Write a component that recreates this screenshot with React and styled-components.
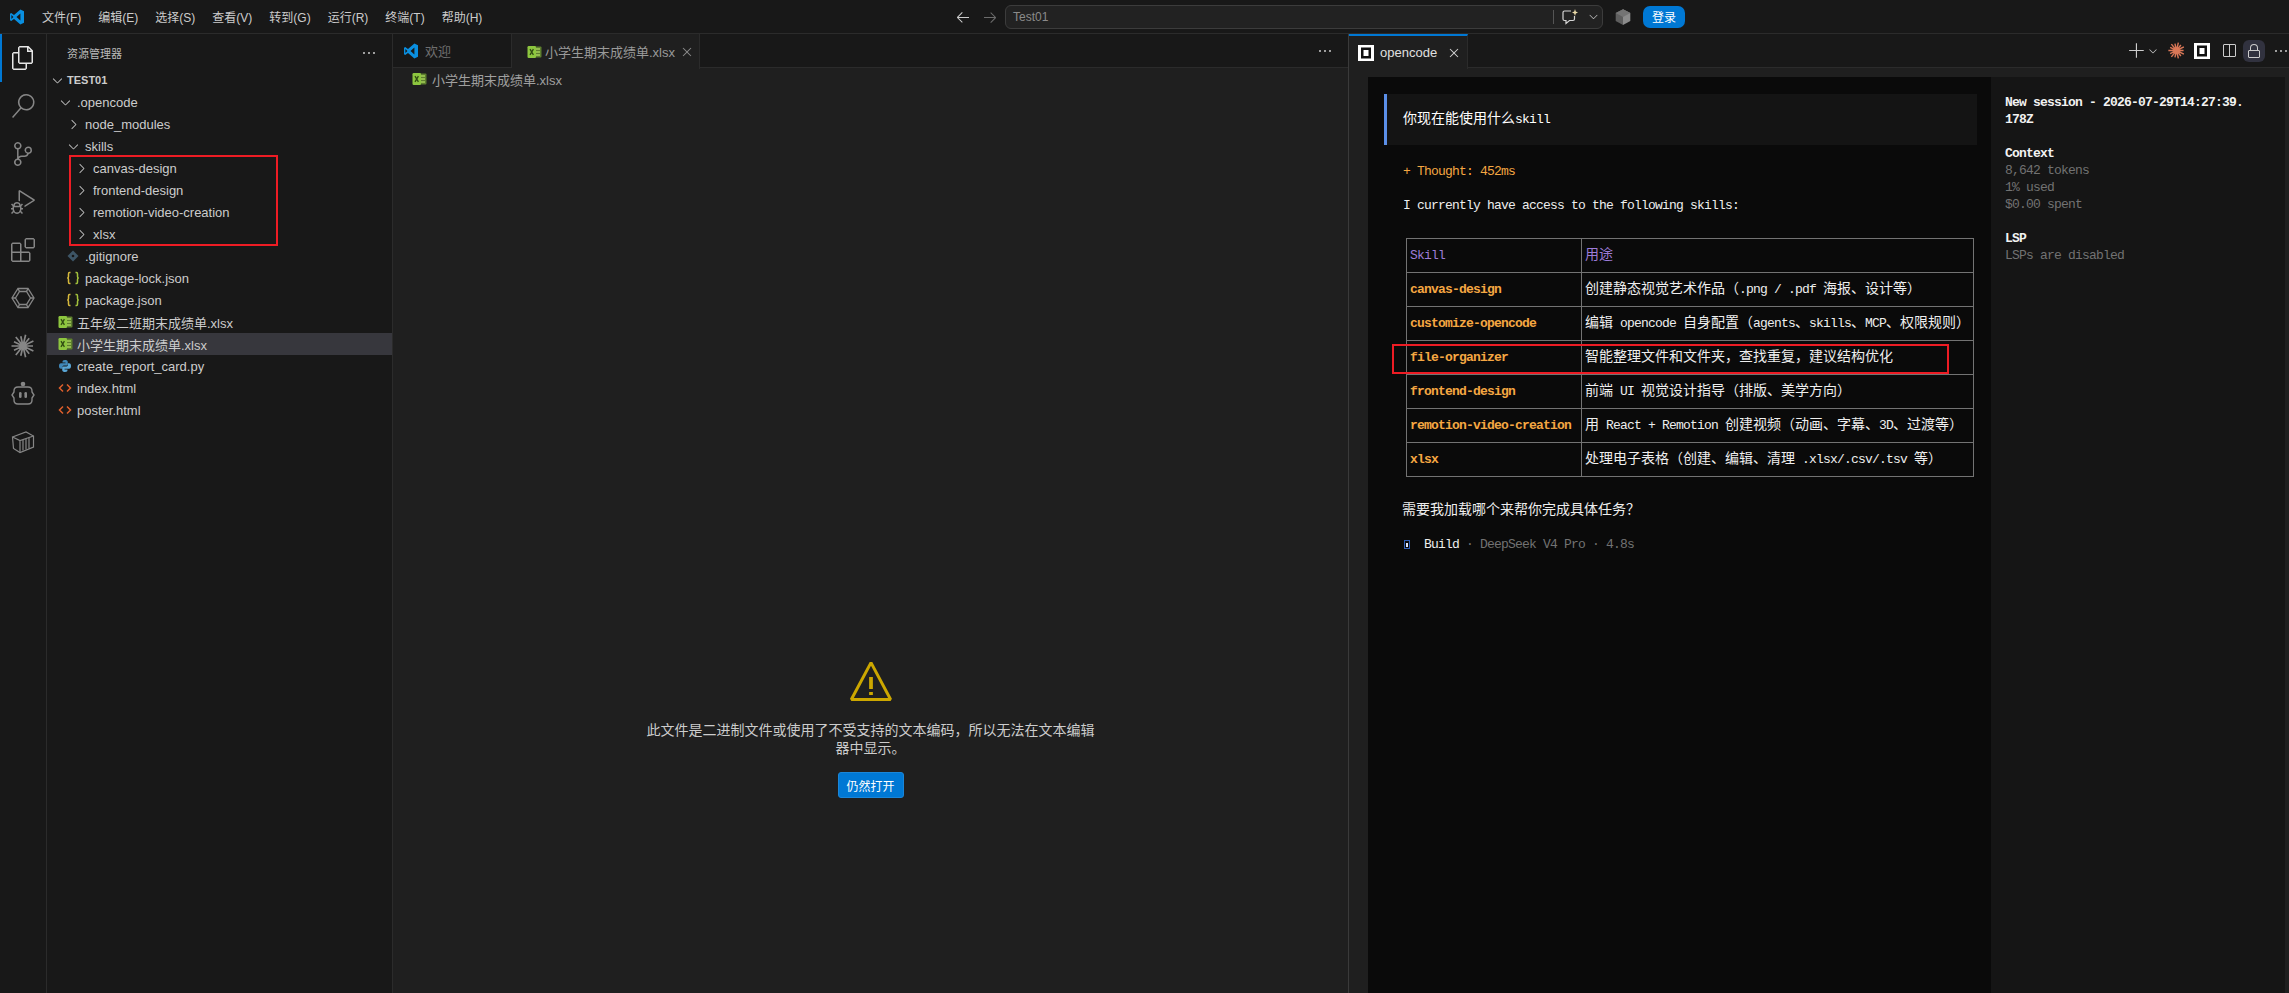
import styled, { createGlobalStyle } from "styled-components";
import {
  VscFiles, VscSearch, VscSourceControl, VscDebugAlt, VscExtensions, VscEllipsis,
  VscChevronRight, VscChevronDown, VscClose, VscAdd, VscArrowLeft, VscArrowRight,
  VscSplitHorizontal, VscLock, VscWarning,
} from "react-icons/vsc";

const UI_FONT = `"Liberation Sans", "Noto Sans CJK SC", sans-serif`;
const MONO_FONT = `"Liberation Mono", "Noto Sans CJK SC", monospace`;

const GlobalStyle = createGlobalStyle`
  html, body { margin: 0; padding: 0; background: #181818; height: 100%; overflow: hidden; }
  * { box-sizing: border-box; }
`;

const Shell = styled.div`
  width: 2289px;
  height: 993px;
  display: flex;
  flex-direction: column;
  background: #181818;
  color: #cccccc;
  font-family: ${UI_FONT};
  font-size: 13px;
  overflow: hidden;
`;

/* title bar */
const TitleBar = styled.div`
  height: 34px;
  flex: none;
  display: flex;
  align-items: center;
  border-bottom: 1px solid #2b2b2b;
  padding-left: 9px;
`;

const MenuBar = styled.div`
  display: flex;
  align-items: center;
  width: 940px;
  font-size: 12px;
  color: #cccccc;
`;

const MenuList = styled.div`
  display: flex;
  gap: 17px;
  margin-left: 17px;
`;

const NavButton = styled.span`
  display: flex;
  width: 27px;
  justify-content: center;
  font-size: 16px;
  color: ${p => (p.$off ? "#6b6b6b" : "#cccccc")};
`;

const CommandBox = styled.div`
  width: 598px;
  height: 24px;
  margin-left: 2px;
  display: flex;
  align-items: center;
  padding-left: 7px;
  background: #222222;
  border: 1px solid #3c3c3c;
  border-radius: 6px;
  font-size: 12px;
  color: #8a8a8a;
`;

const CommandText = styled.span`
  flex: 1;
`;

const CommandDivider = styled.span`
  width: 1px;
  height: 14px;
  background: #555555;
  margin-right: 7px;
`;

const ChevronSlot = styled.span`
  display: flex;
  width: 23px;
  justify-content: flex-end;
  padding-right: 2px;
  font-size: 13px;
  color: #bbbbbb;
`;

const LoginButton = styled.button`
  width: 42px;
  height: 22px;
  border: 0;
  padding: 0;
  border-radius: 7px;
  background: #0078d4;
  color: #ffffff;
  font: 12px ${UI_FONT};
`;

const Workbench = styled.div`
  flex: 1;
  display: flex;
  min-height: 0;
`;

/* activity bar */
const ActivityBar = styled.div`
  width: 47px;
  flex: none;
  border-right: 1px solid #2b2b2b;
`;

const ActivityItem = styled.div`
  height: 48px;
  display: flex;
  align-items: center;
  justify-content: center;
  font-size: 24px;
  color: ${p => (p.$active ? "#e7e7e7" : "#868686")};
  border-left: 2px solid ${p => (p.$active ? "#0078d4" : "transparent")};
  padding-right: 2px;
`;

/* explorer */
const SideBar = styled.div`
  width: 346px;
  flex: none;
  border-right: 1px solid #2b2b2b;
  position: relative;
`;

const SideHeader = styled.div`
  height: 35px;
  display: flex;
  align-items: center;
  justify-content: space-between;
  padding: 2px 15px 0 20px;
  font-size: 11px;
  color: #bbbbbb;
`;

const TreeRow = styled.div`
  height: 22px;
  display: flex;
  align-items: center;
  padding-left: ${p => 2 + 8 * p.$depth}px;
  background: ${p => (p.$selected ? "#37373d" : "transparent")};
  color: #cccccc;
  font-size: 13px;
  font-weight: ${p => (p.$root ? 700 : 400)};
  white-space: nowrap;
  ${p => p.$root && "font-size: 11px;"}
`;

const TreeIcon = styled.span`
  width: 16px;
  height: 16px;
  flex: none;
  margin-right: ${p => (p.$root ? 2 : 4)}px;
  display: flex;
  align-items: center;
  justify-content: center;
  font-size: 15px;
  color: #c5c5c5;
`;

const Callout = styled.div`
  position: absolute;
  border: 2px solid #ed1c24;
  pointer-events: none;
`;

const SkillsCallout = styled(Callout)`
  left: 22px;
  top: 121px;
  width: 209px;
  height: 91px;
`;

/* editor */
const Editor = styled.div`
  width: 956px;
  flex: none;
  display: flex;
  flex-direction: column;
  background: #1f1f1f;
  border-right: 1px solid #3a3a3a;
`;

const TabStrip = styled.div`
  height: 34px;
  flex: none;
  display: flex;
  align-items: stretch;
  background: #181818;
  border-bottom: 1px solid #2b2b2b;
`;

const Tab = styled.div`
  width: ${p => p.$width}px;
  display: flex;
  align-items: center;
  padding-left: ${p => p.$pad}px;
  gap: ${p => p.$gap}px;
  background: ${p => (p.$active ? "#1f1f1f" : "#181818")};
  border-right: 1px solid #2b2b2b;
  border-top: ${p => (p.$focused ? "2px solid #0078d4" : "0")};
  color: ${p => p.$color};
  font-size: 13px;
  white-space: nowrap;
  ${p => p.$active && "height: 35px;"}
`;

const TabClose = styled.span`
  display: flex;
  font-size: 16px;
  color: ${p => p.$color || "#8a8a8a"};
  margin-left: ${p => p.$left}px;
`;

const StripActions = styled.div`
  margin-left: auto;
  display: flex;
  align-items: center;
  padding-right: ${p => p.$right}px;
  color: #cccccc;
  font-size: 16px;
`;

const Breadcrumb = styled.div`
  height: 22px;
  flex: none;
  display: flex;
  align-items: center;
  gap: 5px;
  padding-left: 19px;
  font-size: 13px;
  color: #a0a0a0;
`;

const BinaryNotice = styled.div`
  flex: 1;
  display: flex;
  flex-direction: column;
  align-items: center;
  padding-top: 569px;
`;

const WarningMark = styled.div`
  display: flex;
  font-size: 48px;
  color: #cca700;
  height: 48px;
`;

const NoticeText = styled.p`
  width: 460px;
  margin: 14px 0 0;
  text-align: center;
  font-size: 14px;
  line-height: 18px;
  color: #cccccc;
`;

const OpenButton = styled.button`
  width: 66px;
  height: 26px;
  margin-top: 15px;
  border: 1px solid #1a86d8;
  border-radius: 3px;
  padding: 0;
  background: #0078d4;
  color: #ffffff;
  font: 12px ${UI_FONT};
`;

/* opencode panel */
const Panel = styled.div`
  flex: 1;
  display: flex;
  flex-direction: column;
  background: #1f1f1f;
  min-width: 0;
`;

const PanelTools = styled.div`
  margin-left: auto;
  display: flex;
  align-items: center;
  height: 100%;
`;

const ToolSlot = styled.span`
  display: flex;
  flex: none;
  align-items: center;
  justify-content: ${p => (p.$end ? "flex-end" : "center")};
  width: ${p => p.$w}px;
  height: 22px;
  font-size: ${p => p.$size || 16}px;
  color: #cccccc;
  border-radius: 6px;
  background: ${p => (p.$on ? "#31323f" : "transparent")};
  svg { flex: none; }
`;

const TerminalWrap = styled.div`
  flex: 1;
  display: flex;
  min-height: 0;
  padding: 9px 4px 0 19px;
`;

const Terminal = styled.div`
  width: 623px;
  flex: none;
  position: relative;
  background: #0a0a0a;
  padding: 17px 0 0 16px;
  font: 13px/17px ${MONO_FONT};
  letter-spacing: -0.8px;
  color: #eeeeee;
`;

const Meta = styled.div`
  flex: 1;
  background: #151515;
  padding: 17px 40px 0 14px;
  font: 13px/17px ${MONO_FONT};
  letter-spacing: -0.8px;
  color: #727272;
`;

const MetaTitle = styled.div`
  font-weight: 700;
  color: #f2f2f2;
  margin-top: ${p => (p.$first ? 0 : 17)}px;
  word-break: break-all;
`;

const UserMessage = styled.div`
  width: 593px;
  height: 51px;
  display: flex;
  align-items: center;
  padding-left: 16px;
  background: #141414;
  border-left: 3px solid #5b8fe8;
  color: #ffffff;
`;

const Line = styled.div`
  height: 17px;
  margin: ${p => p.$top}px 0 0 ${p => p.$left}px;
  color: ${p => p.$color || "#eeeeee"};
  white-space: nowrap;
  display: flex;
  align-items: center;
`;

const Wide = styled.span`
  font-size: 14px;
  letter-spacing: 0;
`;

const SkillTable = styled.table`
  margin: 24px 0 0 22px;
  width: 568px;
  border-collapse: collapse;
  table-layout: fixed;
`;

const NameColumn = styled.col`
  width: 175px;
`;

const Cell = styled.td`
  height: 34px;
  padding: 0 3px;
  border: 1px solid #737373;
  white-space: nowrap;
  vertical-align: middle;
  font-weight: ${p => (p.$skill ? 700 : 400)};
  color: ${p => (p.$skill ? "#f5a742" : p.$head ? "#9d7cd8" : "#eeeeee")};
`;

const FileCallout = styled(Callout)`
  left: 24px;
  top: 267px;
  width: 557px;
  height: 30px;
`;

const Muted = styled.span`
  color: #727272;
  white-space: pre;
`;

const BuildMark = styled.span`
  width: 6px;
  height: 9px;
  margin-right: 14px;
  margin-left: 2px;
  border: 1px solid #2f5fb8;
  display: flex;
  align-items: center;
  justify-content: center;
  &::after {
    content: "";
    width: 2px;
    height: 4px;
    background: #dfe8ff;
  }
`;

const BuildName = styled.span`
  color: #eeeeee;
`;

/* CJK in a terminal takes two cells, so give those runs their own size */
function Cells({ text }) {
  const parts = text.split(/([\u3000-\u9fff\uff00-\uffef]+)/);
  return parts.map((part, i) => (i % 2 ? <Wide key={i}>{part}</Wide> : part));
}

function VscodeLogo({ size = 16 }) {
  return (
    <svg width={size} height={size} viewBox="0 0 16 16">
      <path d="M11.4 0.6 L15 2.3 V13.7 L11.4 15.4 L5 9.9 L2.2 12 L1 11.3 V4.7 L2.2 4 L5 6.1 Z M11.4 4.6 L7.5 8 L11.4 11.4 Z M2.4 6 V10 L4.4 8 Z" fill="#0a8fe0" />
    </svg>
  );
}

function ExcelIcon() {
  return (
    <svg width="15" height="14" viewBox="0 0 15 14">
      <rect x="5" y="1.5" width="9.5" height="11" rx="1" fill="#5d7f2e" />
      <path d="M9 4h4M9 7h4M9 10h4" stroke="#a5d05a" strokeWidth="1.4" />
      <rect x="0.5" y="1" width="8.5" height="12" rx="1.2" fill="#8dc63f" />
      <path d="M3 4.2 L6.4 9.8 M6.4 4.2 L3 9.8" stroke="#2f4a12" strokeWidth="1.3" />
    </svg>
  );
}

function BraceIcon() {
  return (
    <svg width="14" height="14" viewBox="0 0 14 14" fill="none" strokeWidth="1.5">
      <path d="M4.5 1.5 H3.5 Q2.5 1.5 2.5 3 V5.5 Q2.5 7 1.2 7 Q2.5 7 2.5 8.5 V11 Q2.5 12.5 3.5 12.5 H4.5" stroke="#d7ba3c" />
      <path d="M9.5 1.5 H10.5 Q11.5 1.5 11.5 3 V5.5 Q11.5 7 12.8 7 Q11.5 7 11.5 8.5 V11 Q11.5 12.5 10.5 12.5 H9.5" stroke="#a3c23c" />
    </svg>
  );
}

function GitIcon() {
  return (
    <svg width="14" height="14" viewBox="0 0 14 14">
      <path d="M7 1.5 L12.5 7 L7 12.5 L1.5 7 Z" fill="#3d5566" />
      <circle cx="7" cy="7" r="1.3" fill="#161616" />
    </svg>
  );
}

function PythonIcon() {
  return (
    <svg width="14" height="14" viewBox="0 0 14 14">
      <path d="M7 1 C4.5 1 4.5 2 4.5 3.5 H7.5 V4.3 H3 C1.5 4.3 1 5.5 1 7 C1 8.5 1.5 9.7 3 9.7 H4.3 V8.3 C4.3 7 5.2 6.4 6.4 6.4 H9 C9.8 6.4 9.8 5.6 9.8 5 V3 C9.8 1.6 8.5 1 7 1Z" fill="#3f87b8" />
      <path d="M7 13 C9.5 13 9.5 12 9.5 10.5 H6.5 V9.7 H11 C12.5 9.7 13 8.5 13 7 C13 5.5 12.5 4.3 11 4.3 H10 V5.7 C10 7 8.8 7.6 7.6 7.6 H5 C4.2 7.6 4.2 8.4 4.2 9 V11 C4.2 12.4 5.5 13 7 13Z" fill="#5aa7d6" />
    </svg>
  );
}

function HtmlIcon() {
  return (
    <svg width="14" height="14" viewBox="0 0 14 14" fill="none" stroke="#e0602c" strokeWidth="1.5">
      <path d="M5 3.5 L1.5 7 L5 10.5" />
      <path d="M9 3.5 L12.5 7 L9 10.5" />
    </svg>
  );
}

function HexRing() {
  return (
    <svg width="24" height="24" viewBox="0 0 24 24" fill="none" stroke="#868686" strokeWidth="1.3">
      <path d="M7 2.5 H17 L23 12 L17 21.5 H7 L1 12 Z" />
      <path d="M8.5 5.5 H15.5 L19.5 12 L15.5 18.5 H8.5 L4.5 12 Z" />
      <path d="M7 2.5 L8.5 5.5 M17 2.5 L15.5 5.5 M23 12 H19.5 M17 21.5 L15.5 18.5 M7 21.5 L8.5 18.5 M1 12 H4.5" />
    </svg>
  );
}

function Burst({ size = 24, color = "#868686", width = 1.7 }) {
  const rays = Array.from({ length: 14 }, (_, i) => {
    const a = (i / 14) * Math.PI * 2;
    const r = i % 2 ? 11.5 : 10;
    return `M12 12 L${(12 + r * Math.cos(a)).toFixed(1)} ${(12 + r * Math.sin(a)).toFixed(1)}`;
  });
  return (
    <svg width={size} height={size} viewBox="0 0 24 24" fill="none" stroke={color} strokeWidth={width}>
      <path d={rays.join(" ")} />
    </svg>
  );
}

function RobotIcon() {
  return (
    <svg width="24" height="26" viewBox="0 0 24 26" fill="none" stroke="#868686" strokeWidth="1.4">
      <circle cx="12" cy="3" r="1.6" fill="#868686" />
      <path d="M7 6 H17 Q21 6 21 10 V11 L23 14 L21 17 V19 Q21 23 17 23 H7 Q3 23 3 19 V17 L1 14 L3 11 V10 Q3 6 7 6Z" />
      <rect x="8" y="11" width="2.6" height="6" rx="1.3" fill="#868686" stroke="none" />
      <rect x="13.4" y="11" width="2.6" height="6" rx="1.3" fill="#868686" stroke="none" />
    </svg>
  );
}

function CrateIcon() {
  return (
    <svg width="24" height="24" viewBox="0 0 24 24" fill="none" stroke="#868686" strokeWidth="1.2">
      <path d="M1.5 7 L15 2 L22.5 6 V17 L9 22.5 L2.5 18.5 Z" />
      <path d="M1.5 7 L9 10.5 L22.5 6 M9 10.5 V22.5" />
      <path d="M12 10 V20.5 M15 9 V19.5 M18 8 V18.5" />
    </svg>
  );
}

function ChatSpark() {
  return (
    <svg width="18" height="18" viewBox="0 0 18 18" fill="none" stroke="#d5d5d5" strokeWidth="1.2">
      <path d="M10 3 H3.5 Q2 3 2 4.5 V11 Q2 12.5 3.5 12.5 H5 V15.5 L8.5 12.5 H12 Q13.5 12.5 13.5 11 V8" />
      <path d="M14 1 L14.8 3.6 L17 4.5 L14.8 5.4 L14 8 L13.2 5.4 L11 4.5 L13.2 3.6 Z" fill="#e8d9a8" stroke="none" />
    </svg>
  );
}

function ShadedHex() {
  return (
    <svg width="18" height="18" viewBox="0 0 16 16">
      <path d="M8 1 L14.5 4.5 V11.5 L8 15 Z" fill="#8c8c8c" />
      <path d="M8 1 L1.5 4.5 V11.5 L8 15 Z" fill="#5e5e5e" />
      <path d="M1.5 4.5 L8 8 L14.5 4.5 L8 1 Z" fill="#747474" />
    </svg>
  );
}

function OpencodeLogo() {
  return (
    <svg width="16" height="16" viewBox="0 0 16 16">
      <rect width="16" height="16" fill="#ffffff" />
      <rect x="3" y="2.5" width="10" height="11" fill="#111111" />
      <rect x="5.5" y="5" width="5" height="6" fill="#ffffff" />
    </svg>
  );
}

const MENUS = ["文件(F)", "编辑(E)", "选择(S)", "查看(V)", "转到(G)", "运行(R)", "终端(T)", "帮助(H)"];

const TREE = [
  { name: "TEST01", depth: 0, open: true, root: true },
  { name: ".opencode", depth: 1, open: true },
  { name: "node_modules", depth: 2, open: false },
  { name: "skills", depth: 2, open: true },
  { name: "canvas-design", depth: 3, open: false },
  { name: "frontend-design", depth: 3, open: false },
  { name: "remotion-video-creation", depth: 3, open: false },
  { name: "xlsx", depth: 3, open: false },
  { name: ".gitignore", depth: 2, icon: <GitIcon /> },
  { name: "package-lock.json", depth: 2, icon: <BraceIcon /> },
  { name: "package.json", depth: 2, icon: <BraceIcon /> },
  { name: "五年级二班期末成绩单.xlsx", depth: 1, icon: <ExcelIcon /> },
  { name: "小学生期末成绩单.xlsx", depth: 1, icon: <ExcelIcon />, selected: true },
  { name: "create_report_card.py", depth: 1, icon: <PythonIcon /> },
  { name: "index.html", depth: 1, icon: <HtmlIcon /> },
  { name: "poster.html", depth: 1, icon: <HtmlIcon /> },
];

const SKILLS = [
  ["canvas-design", "创建静态视觉艺术作品（.png / .pdf 海报、设计等）"],
  ["customize-opencode", "编辑 opencode 自身配置（agents、skills、MCP、权限规则）"],
  ["file-organizer", "智能整理文件和文件夹，查找重复，建议结构优化"],
  ["frontend-design", "前端 UI 视觉设计指导（排版、美学方向）"],
  ["remotion-video-creation", "用 React + Remotion 创建视频（动画、字幕、3D、过渡等）"],
  ["xlsx", "处理电子表格（创建、编辑、清理 .xlsx/.csv/.tsv 等）"],
];

export default function App() {
  return (
    <Shell>
      <GlobalStyle />
      <TitleBar>
        <MenuBar>
          <VscodeLogo />
          <MenuList>
            {MENUS.map(m => <span key={m}>{m}</span>)}
          </MenuList>
        </MenuBar>
        <NavButton><VscArrowLeft /></NavButton>
        <NavButton $off><VscArrowRight /></NavButton>
        <CommandBox>
          <CommandText>Test01</CommandText>
          <CommandDivider />
          <ChatSpark />
          <ChevronSlot><VscChevronDown /></ChevronSlot>
        </CommandBox>
        <ToolSlot $w={40}><ShadedHex /></ToolSlot>
        <LoginButton>登录</LoginButton>
      </TitleBar>

      <Workbench>
        <ActivityBar>
          <ActivityItem $active><VscFiles /></ActivityItem>
          <ActivityItem><VscSearch /></ActivityItem>
          <ActivityItem><VscSourceControl /></ActivityItem>
          <ActivityItem><VscDebugAlt /></ActivityItem>
          <ActivityItem><VscExtensions /></ActivityItem>
          <ActivityItem><HexRing /></ActivityItem>
          <ActivityItem><Burst /></ActivityItem>
          <ActivityItem><RobotIcon /></ActivityItem>
          <ActivityItem><CrateIcon /></ActivityItem>
        </ActivityBar>

        <SideBar>
          <SideHeader>
            <span>资源管理器</span>
            <VscEllipsis size={16} color="#cccccc" />
          </SideHeader>
          {TREE.map(item => (
            <TreeRow key={item.name} $depth={item.depth} $selected={item.selected} $root={item.root}>
              <TreeIcon $root={item.root}>
                {item.icon || (item.open ? <VscChevronDown /> : <VscChevronRight />)}
              </TreeIcon>
              {item.name}
            </TreeRow>
          ))}
          <SkillsCallout />
        </SideBar>

        <Editor>
          <TabStrip>
            <Tab $width={119} $pad={10} $gap={6} $color="#6f6f6f"><VscodeLogo />欢迎</Tab>
            <Tab $width={188} $pad={15} $gap={3} $color="#9a9a9a" $active>
              <ExcelIcon />小学生期末成绩单.xlsx
              <TabClose $left={1}><VscClose /></TabClose>
            </Tab>
            <StripActions $right={15}><VscEllipsis /></StripActions>
          </TabStrip>
          <Breadcrumb><ExcelIcon />小学生期末成绩单.xlsx</Breadcrumb>
          <BinaryNotice>
            <WarningMark><VscWarning /></WarningMark>
            <NoticeText>此文件是二进制文件或使用了不受支持的文本编码，所以无法在文本编辑器中显示。</NoticeText>
            <OpenButton>仍然打开</OpenButton>
          </BinaryNotice>
        </Editor>

        <Panel>
          <TabStrip>
            <Tab $width={119} $pad={9} $gap={6} $color="#e0e0e0" $active $focused>
              <OpencodeLogo />opencode
              <TabClose $left={3} $color="#d0d0d0"><VscClose /></TabClose>
            </Tab>
            <PanelTools>
              <ToolSlot $w={12} $size={18}><VscAdd /></ToolSlot>
              <ToolSlot $w={20} $size={12}><VscChevronDown /></ToolSlot>
              <ToolSlot $w={26}><Burst size={17} color="#d97757" width={2} /></ToolSlot>
              <ToolSlot $w={26}><OpencodeLogo /></ToolSlot>
              <ToolSlot $w={28}><VscSplitHorizontal /></ToolSlot>
              <ToolSlot $w={22} $on><VscLock /></ToolSlot>
              <ToolSlot $w={24} $end><VscEllipsis /></ToolSlot>
            </PanelTools>
          </TabStrip>
          <TerminalWrap>
            <Terminal>
              <UserMessage><span><Cells text="你现在能使用什么skill" /></span></UserMessage>
              <Line $top={18} $left={19} $color="#f5a742">+ Thought: 452ms</Line>
              <Line $top={17} $left={19}>I currently have access to the following skills:</Line>
              <SkillTable>
                <colgroup>
                  <NameColumn />
                  <col />
                </colgroup>
                <tbody>
                  <tr>
                    <Cell $head>Skill</Cell>
                    <Cell $head><Wide>用途</Wide></Cell>
                  </tr>
                  {SKILLS.map(([name, use]) => (
                    <tr key={name}>
                      <Cell $skill>{name}</Cell>
                      <Cell><Cells text={use} /></Cell>
                    </tr>
                  ))}
                </tbody>
              </SkillTable>
              <Line $top={25} $left={18}><span><Cells text="需要我加载哪个来帮你完成具体任务？" /></span></Line>
              <Line $top={17} $left={18}>
                <BuildMark />
                <BuildName>Build</BuildName>
                <Muted> · DeepSeek V4 Pro · 4.8s</Muted>
              </Line>
              <FileCallout />
            </Terminal>
            <Meta>
              <MetaTitle $first>New session - 2026-07-29T14:27:39.178Z</MetaTitle>
              <MetaTitle>Context</MetaTitle>
              <div>8,642 tokens</div>
              <div>1% used</div>
              <div>$0.00 spent</div>
              <MetaTitle>LSP</MetaTitle>
              <div>LSPs are disabled</div>
            </Meta>
          </TerminalWrap>
        </Panel>
      </Workbench>
    </Shell>
  );
}
